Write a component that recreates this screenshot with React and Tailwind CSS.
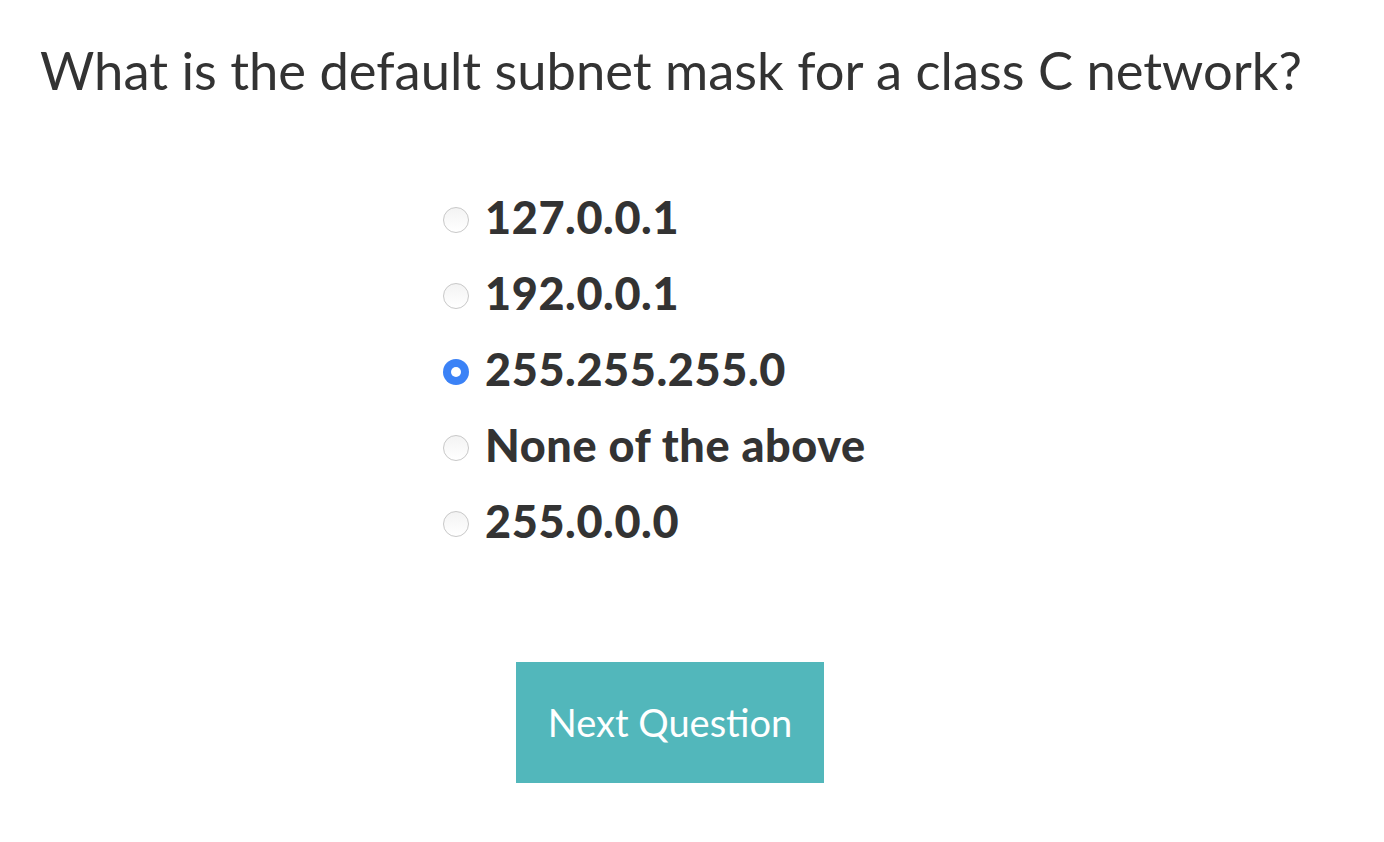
import React, { useState } from "react";

const options = [
  "127.0.0.1",
  "192.0.0.1",
  "255.255.255.0",
  "None of the above",
  "255.0.0.0",
];

const App = () => {
  const [picked, setPicked] = useState(2);

  return (
    <div className="w-[1384px] h-[842px] bg-white text-[#333] font-['Lato','Liberation_Sans',sans-serif]">
      {/* Question */}
      <h1 className="pl-[40px] pt-[36px] text-[52.5px] leading-[68px] font-normal">
        What is the default subnet mask for a class C network?
      </h1>

      {/* Answers */}
      <div className="ml-[443px] mt-[88px] flex flex-col gap-[26px]">
        {options.map((opt, i) => (
          <label key={i} className="flex items-center gap-[16px] h-[50px] cursor-pointer">
            <span
              onClick={() => setPicked(i)}
              className={`w-[26px] h-[26px] rounded-full shrink-0 flex items-center justify-center mt-[6px] ${
                picked === i
                  ? "bg-[#3b82f6]"
                  : "bg-gradient-to-b from-[#f3f3f3] to-white border border-[#c8c8c8]"
              }`}
            >
              {picked === i && <span className="w-[10px] h-[10px] rounded-full bg-white" />}
            </span>
            <span className="text-[45px] font-black leading-none tracking-[0.6px]">{opt}</span>
          </label>
        ))}
      </div>

      {/* Next */}
      <button
        type="button"
        className="ml-[516px] mt-[116px] w-[308px] h-[121px] bg-[#52b7bb] text-white text-[38px] font-normal"
      >
        Next Question
      </button>
    </div>
  );
};

export default App;
